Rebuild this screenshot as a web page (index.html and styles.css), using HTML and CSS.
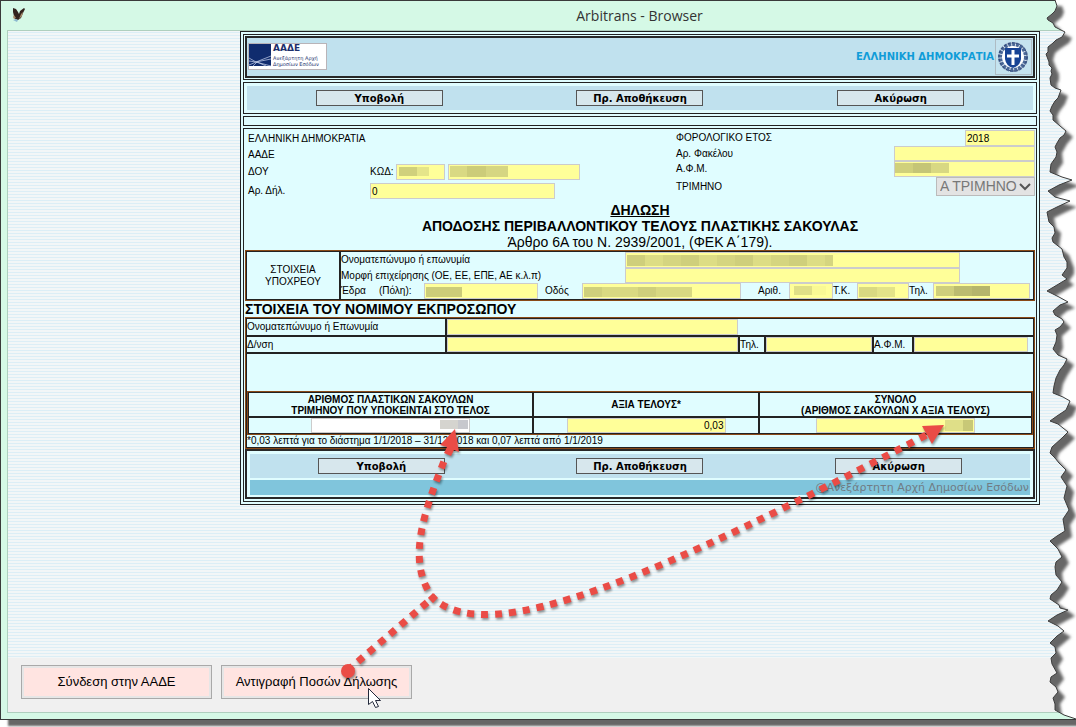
FILE: index.html
```html
<!DOCTYPE html>
<html lang="el">
<head>
<meta charset="utf-8">
<title>Arbitrans - Browser</title>
<link rel="stylesheet" href="styles.css">
</head>
<body>
<div class="window">
  <header class="titlebar">
    <svg class="bird" width="14" height="16" viewBox="0 0 14 16" aria-hidden="true">
      <path d="M1 1l3 1 2 3 1 2 1-3 4-3 1 1-2 4-2 5-3 2-3-1-1-3-1-4z" fill="#33241e"/>
      <path d="M2 8l2 3-2 1-1-2zM9 7l2-2-1 4-3 3z" fill="#a88c6c"/>
      <path d="M1 13l3-1 2 1-1 2-2-1z" fill="#8dbad0"/>
    </svg>
    <h1>Arbitrans - Browser</h1>
  </header>
  <main class="client">
    <div class="browse">
      <form class="panel">
        <div class="frame banner">
          <div class="banner-in">
            <svg class="aade" width="79" height="27" viewBox="0 0 79 27" role="img" aria-label="ΑΑΔΕ">
              <rect x=".5" y=".5" width="78" height="26" fill="#fff" stroke="#b9b4b8"/>
              <rect x="1" y="1" width="22" height="22" fill="#102c6e"/>
              <path d="M1 15l7 4 15-6M1 18l7 1 15-3M1 22l7-3 15 4M5 23l4-4 9 4" fill="none" stroke="#c8d4ee" stroke-width=".7"/>
              <text x="25" y="8" class="aade-big">ΑΑΔΕ</text>
              <text x="25" y="17" class="aade-small">Ανεξάρτητη Αρχή</text>
              <text x="25" y="23" class="aade-small">Δημοσίων Εσόδων</text>
            </svg>
            <span class="republic">ΕΛΛΗΝΙΚΗ ΔΗΜΟΚΡΑΤΙΑ</span>
            <svg class="emblem" width="37" height="36" viewBox="0 0 37 36" aria-hidden="true">
              <rect x=".5" y=".5" width="36" height="35" fill="#c5e3ef" stroke="#aebcc4"/>
              <circle cx="18" cy="18" r="13" fill="#fff" stroke="#dbe6f0" stroke-width="4"/>
              <circle cx="18" cy="18" r="13" fill="none" stroke="#4a6796" stroke-width="4" stroke-dasharray="3 1"/>
              <circle cx="18" cy="18" r="14" fill="none" stroke="#29406f" stroke-dasharray="2 2"/>
              <path d="M10 9h16v11q-1 7-8 9-7-2-8-9z" fill="#174394"/>
              <path d="M18 11v15M12 17h12" stroke="#fff" stroke-width="3"/>
            </svg>
          </div>
        </div>
        <div class="frame">
          <div class="actions">
            <button type="button">Υποβολή</button>
            <button type="button">Πρ. Αποθήκευση</button>
            <button type="button">Ακύρωση</button>
          </div>
        </div>
        <div class="frame strip"></div>
        <div class="frame body">
          <div class="head">
            <div class="head-left">
              <p>ΕΛΛΗΝΙΚΗ ΔΗΜΟΚΡΑΤΙΑ</p>
              <p>ΑΑΔΕ</p>
              <div class="office"><span>ΔΟΥ</span><label for="code">ΚΩΔ:</label><input id="code" class="m-code"><input aria-label="Όνομα ΔΟΥ" class="m-office"></div>
              <div class="number"><label for="num">Αρ. Δήλ.</label><input id="num" value="0"></div>
            </div>
            <div class="head-right">
              <div class="line"><label for="year">ΦΟΡΟΛΟΓΙΚΟ ΕΤΟΣ</label><input id="year" class="year" value="2018"></div>
              <div class="line low"><label for="file">Αρ. Φακέλου</label><input id="file"></div>
              <div class="line"><label for="afm">Α.Φ.Μ.</label><input id="afm" class="m-afm"></div>
              <div class="line quarter"><label for="q">ΤΡΙΜΗΝΟ</label>
                <span class="pick"><select id="q"><option>Α ΤΡΙΜΗΝΟ</option></select><svg width="12" height="8" viewBox="0 0 12 8" aria-hidden="true"><path d="M1 1l5 5 5-5" fill="none" stroke="#555" stroke-width="2"/></svg></span>
              </div>
            </div>
          </div>
          <div class="title">
            <h2><u>ΔΗΛΩΣΗ</u></h2>
            <h2>ΑΠΟΔΟΣΗΣ ΠΕΡΙΒΑΛΛΟΝΤΙΚΟΥ ΤΕΛΟΥΣ ΠΛΑΣΤΙΚΗΣ ΣΑΚΟΥΛΑΣ</h2>
            <p>Άρθρο 6Α του Ν. 2939/2001, (ΦΕΚ Α΄179).</p>
          </div>
          <div class="brown"><div class="dark party">
            <div class="party-name">ΣΤΟΙΧΕΙΑ<br>ΥΠΟΧΡΕΟΥ</div>
            <div class="party-rows">
              <div class="wide"><label for="pn">Ονοματεπώνυμο ή επωνυμία</label><input id="pn" class="m-name"></div>
              <div class="wide low"><label for="pf">Μορφή επιχείρησης (ΟΕ, ΕΕ, ΕΠΕ, ΑΕ κ.λ.π)</label><input id="pf"></div>
              <div class="address">
                <label class="seat" for="city"><span>Έδρα</span><span>(Πόλη):</span></label><input id="city" class="m-city">
                <label class="mid" for="street">Οδός</label><input id="street" class="m-street">
                <label class="far" for="no">Αριθ.</label><input id="no" class="m-no">
                <label for="zip">Τ.Κ.</label><input id="zip" class="m-zip">
                <label for="tel">Τηλ.</label><input id="tel" class="m-tel">
              </div>
            </div>
          </div></div>
          <h2 class="section">ΣΤΟΙΧΕΙΑ ΤΟΥ ΝΟΜΙΜΟΥ ΕΚΠΡΟΣΩΠΟΥ</h2>
          <div class="brown"><div class="dark">
            <table class="agent">
              <colgroup><col class="c1"><col class="c2"><col class="c3"><col class="c4"><col class="c5"><col class="c6"></colgroup>
              <tr><td><label for="an">Ονοματεπώνυμο ή Επωνυμία</label></td><td class="open"><input id="an"></td><td colspan="4"></td></tr>
              <tr><td><label for="aa">Δ/νση</label></td><td><input id="aa"></td><td><label for="at">Τηλ.</label></td><td><input id="at"></td><td><label for="av">Α.Φ.Μ.</label></td><td class="tail"><input id="av"></td></tr>
            </table>
            <div class="amount-wrap"><div class="brown"><div class="dark">
              <table class="amounts">
                <colgroup><col class="a1"><col class="a2"><col></colgroup>
                <tr><th>ΑΡΙΘΜΟΣ ΠΛΑΣΤΙΚΩΝ ΣΑΚΟΥΛΩΝ<br>ΤΡΙΜΗΝΟΥ ΠΟΥ ΥΠΟΚΕΙΝΤΑΙ ΣΤΟ ΤΕΛΟΣ</th><th>ΑΞΙΑ ΤΕΛΟΥΣ*</th><th>ΣΥΝΟΛΟ<br>(ΑΡΙΘΜΟΣ ΣΑΚΟΥΛΩΝ Χ ΑΞΙΑ ΤΕΛΟΥΣ)</th></tr>
                <tr><td><input class="blank" aria-label="Αριθμός σακουλών"></td><td><input aria-label="Αξία τέλους" value="0,03"></td><td><input class="m-total" aria-label="Σύνολο"></td></tr>
              </table>
            </div></div></div>
            <p class="note">*0,03 λεπτά για το διάστημα 1/1/2018 – 31/12/2018 και 0,07 λεπτά από 1/1/2019</p>
          </div></div>
          <div class="bottom">
            <div class="actions">
              <button type="button">Υποβολή</button>
              <button type="button">Πρ. Αποθήκευση</button>
              <button type="button">Ακύρωση</button>
            </div>
            <p class="owner">@Ανεξάρτητη Αρχή Δημοσίων Εσόδων</p>
          </div>
        </div>
      </form>
    </div>
    <footer class="toolbar">
      <button type="button">Σύνδεση στην ΑΑΔΕ</button>
      <button type="button">Αντιγραφή Ποσών Δήλωσης</button>
    </footer>
  </main>
</div>

<svg class="tear" width="40" height="727" viewBox="1036 0 40 727" aria-hidden="true">
  <defs>
    <path id="edge" d="M1055 0L1057 6 1055 11 1052 14 1047 18 1048 20 1053 23 1055 27 1065 32 1062 37 1056 40 1053 43 1048 47 1048 52 1046 54 1049 62 1049 65 1052 68 1051 71 1052 74 1050 78 1051 85 1055 88 1061 90 1058 98 1055 101 1052 106 1050 111 1053 115 1053 120 1060 126 1066 131 1064 135 1060 138 1057 143 1055 147 1057 152 1056 157 1051 164 1050 172 1062 177 1072 180 1059 185 1048 191 1055 197 1070 201 1057 207 1047 212 1049 222 1054 227 1055 233 1052 238 1053 242 1062 249 1064 257 1067 262 1067 268 1062 275 1067 279 1057 285 1047 291 1059 297 1068 302 1060 305 1053 311 1055 315 1062 319 1064 322 1060 327 1055 330 1057 335 1056 342 1053 349 1058 355 1067 359 1064 365 1060 370 1056 378 1054 386 1053 393 1063 397 1070 401 1066 410 1057 416 1050 421 1058 424 1063 428 1068 432 1062 438 1052 447 1050 453 1055 458 1059 463 1066 470 1061 477 1067 486 1064 498 1069 510 1063 519 1065 531 1057 536 1050 541 1058 549 1062 557 1056 562 1055 567 1056 575 1062 582 1057 590 1051 595 1050 599 1059 605 1060 608 1068 610 1057 615 1048 621 1058 626 1064 631 1057 636 1050 643 1055 647 1056 653 1051 658 1052 664 1057 673 1051 677 1050 682 1056 687 1058 692 1053 698 1055 704 1055 710 1064 715 1076 719"/>
    <clipPath id="outside"><path d="M1055 0L1057 6 1055 11 1052 14 1047 18 1048 20 1053 23 1055 27 1065 32 1062 37 1056 40 1053 43 1048 47 1048 52 1046 54 1049 62 1049 65 1052 68 1051 71 1052 74 1050 78 1051 85 1055 88 1061 90 1058 98 1055 101 1052 106 1050 111 1053 115 1053 120 1060 126 1066 131 1064 135 1060 138 1057 143 1055 147 1057 152 1056 157 1051 164 1050 172 1062 177 1072 180 1059 185 1048 191 1055 197 1070 201 1057 207 1047 212 1049 222 1054 227 1055 233 1052 238 1053 242 1062 249 1064 257 1067 262 1067 268 1062 275 1067 279 1057 285 1047 291 1059 297 1068 302 1060 305 1053 311 1055 315 1062 319 1064 322 1060 327 1055 330 1057 335 1056 342 1053 349 1058 355 1067 359 1064 365 1060 370 1056 378 1054 386 1053 393 1063 397 1070 401 1066 410 1057 416 1050 421 1058 424 1063 428 1068 432 1062 438 1052 447 1050 453 1055 458 1059 463 1066 470 1061 477 1067 486 1064 498 1069 510 1063 519 1065 531 1057 536 1050 541 1058 549 1062 557 1056 562 1055 567 1056 575 1062 582 1057 590 1051 595 1050 599 1059 605 1060 608 1068 610 1057 615 1048 621 1058 626 1064 631 1057 636 1050 643 1055 647 1056 653 1051 658 1052 664 1057 673 1051 677 1050 682 1056 687 1058 692 1053 698 1055 704 1055 710 1064 715 1076 719V0z"/></clipPath>
    <filter id="soft" filterUnits="userSpaceOnUse" x="1020" y="-10" width="80" height="750"><feGaussianBlur stdDeviation="1.5"/></filter>
  </defs>
  <g clip-path="url(#outside)">
    <rect x="1036" y="0" width="40" height="727" fill="#fff"/>
    <g filter="url(#soft)"><path transform="translate(7 6)" fill="#666" stroke="none" d="M1020 0H1055L1057 6 1055 11 1047 18 1053 23 1055 27 1065 32 1062 37 1053 43 1048 47 1046 54 1049 62 1052 68 1052 74 1050 78 1051 85 1061 90 1058 98 1052 106 1050 111 1053 120 1066 131 1060 138 1055 147 1056 157 1051 164 1050 172 1072 180 1059 185 1048 191 1055 197 1070 201 1057 207 1047 212 1049 222 1054 227 1052 241 1062 249 1067 262 1067 268 1062 275 1067 279 1057 285 1047 291 1059 297 1068 302 1060 305 1053 311 1064 322 1055 330 1056 342 1053 349 1067 359 1060 370 1056 378 1053 393 1070 401 1066 410 1050 421 1058 424 1068 432 1062 438 1052 447 1050 453 1066 470 1061 477 1067 486 1064 498 1069 510 1063 519 1065 531 1050 541 1058 549 1062 557 1055 567 1056 575 1062 582 1057 590 1050 597 1068 610 1048 621 1064 631 1050 643 1056 653 1051 661 1057 673 1050 682 1058 691 1053 698 1055 710 1076 719H1020z"/></g>
  </g>
  <use href="#edge" fill="none" stroke="#3c3c3c"/>
</svg>

<svg class="notes" width="1076" height="727" viewBox="0 0 1076 727" aria-hidden="true">
  <g class="arrows" fill="#ea4c46" stroke="none">
    <g fill="none" stroke="#ea4c46" stroke-width="7">
      <path d="M348 670L430 600" stroke-dasharray="7 7" stroke-dashoffset="-13"/>
      <path d="M433 598C405 560 425 510 446 456" stroke-dasharray="7 7" stroke-dashoffset="-10"/>
      <path d="M433 598C490 650 660 575 930 433" stroke-dasharray="7 7" stroke-dashoffset="-10"/>
    </g>
    <circle cx="348" cy="671" r="7"/>
    <path d="M433 593l5 5-5 5-5-5z"/>
    <path d="M455 429l4 23-5-2-3 6-7-3 3-6-7-2z"/>
    <path d="M944 425l-22 1 10 18z"/>
  </g>
  <path d="M368.500 688.500v16l4-3 3 6 3-1-3-6h5z" fill="#fff" stroke="#22283a"/>
</svg>
</body>
</html>
```
FILE: styles.css
```css
* { box-sizing: border-box; }
body { margin: 0; min-height: 100vh; position: relative; display: flex; flex-direction: column; overflow: hidden; background: #fff; color: #000; font: 10px/12px "Liberation Sans", sans-serif; }
h1, h2, p { margin: 0; font-size: inherit; font-weight: normal; }
button, input, select { font: inherit; color: inherit; margin: 0; border-radius: 0; }

.window { flex: 1; display: flex; flex-direction: column; margin-bottom: 7px; padding: 0 0 6px 6px; border: 1px solid #3a3a3a; border-right: 0; background: #d5f9e6; box-shadow: 8px 6px 2px #666; }
.titlebar { height: 29px; position: relative; display: flex; align-items: center; justify-content: center; padding-left: 196px; }
.titlebar h1 { font: 14px/20px "Open Sans", sans-serif; color: #333; }
.bird { position: absolute; left: 5px; top: 6px; }
.client { flex: 1; display: flex; flex-direction: column; border: 1px solid #afcfbe; border-right: 0; background: #f0f0f0; }
.browse { flex: 1; background: repeating-linear-gradient(#f2f6f7 0 1px, #dceef6 1px 2px, #f2f6f7 2px 3px); }
.toolbar { display: flex; gap: 9px; padding: 7px 13px 13px; }
.toolbar button { width: 191px; height: 34px; padding: 0; border: 1px solid #a9a9a9; box-shadow: inset 0 0 0 2px #e6e6e6; background: #ffe4e1; font-size: 13px; }

.panel { margin: 0 36px 0 232px; padding: 2px; border: 1px solid #222; background: #e0fdff; display: flex; flex-direction: column; gap: 2px; }
.frame { border: 1px solid #222; padding: 1px; }
.banner-in { height: 42px; display: flex; align-items: center; border: 2px solid #282828; padding: 0 1px; background: #c0e1ee; }
.aade { margin-top: -1px; }
.aade-big { font: bold 9px "DejaVu Sans", sans-serif; fill: #1c2f6b; }
.aade-small { font: 5px "DejaVu Sans", sans-serif; fill: #1c2f6b; }
.republic { margin-left: auto; padding-right: 1px; color: #109cd8; font: bold 10px/14px "DejaVu Sans", sans-serif; }
.actions { display: grid; grid-template-columns: repeat(3, 1fr); place-items: center; height: 24px; padding: 0 2px; background: #c0e1ee; }
.frame > .actions { margin: 2px; }
.actions > :first-child { justify-self: center; }
.actions button { width: 127px; height: 16px; padding: 1px 0 0; border: 1px solid #555; background: #d7e7ed; font: bold 10px/13px "DejaVu Sans", sans-serif; }
.strip { height: 10px; }
.body { padding: 0 1px 2px; }

input { display: block; width: 100%; min-width: 0; height: 16px; padding: 0 1px; border: 1px solid #ccc; background: #ff9 no-repeat; }
.low input { height: 15px; }
.head { display: grid; grid-template-columns: 428px 1fr; height: 73px; padding-left: 3px; }
.head-left { display: grid; grid-template-rows: 16px 16px 18px 20px; align-items: center; padding-top: 2px; }
.office { display: grid; grid-template-columns: 122px 26px 49px 135px; align-items: center; }
.office .m-office { margin-left: 3px; width: 132px; }
.number { display: grid; grid-template-columns: 122px 185px; align-items: center; }
.head-right { padding-top: 1px; }
.line { display: flex; justify-content: space-between; align-items: center; }
.line input { width: 141px; }
.line .year { width: 70px; }
.pick { position: relative; width: 99px; }
.pick svg { position: absolute; right: 4px; top: 6px; }
.pick select { display: block; width: 100%; height: 19px; padding: 0 3px; border: 1px solid #bbb; background: #e3e3e3; color: #777; font-size: 14px; line-height: 17px; appearance: none; }

.title { text-align: center; font-size: 14px; line-height: 16px; }
.title h2, .section { font-weight: bold; }
.section { font-size: 14px; line-height: 16px; }
.brown { border: 1px solid #8a4a17; }
.dark { border: 1px solid #222; }
.party { display: flex; }
.party-name { width: 94px; display: flex; align-items: center; justify-content: center; text-align: center; border-right: 2px solid #222; }
.party-rows { flex: 1; }
.wide { display: grid; grid-template-columns: 284px 335fr 73fr; align-items: center; }
.address { display: grid; grid-template-columns: 83px 114fr 44px 159fr 48px 44fr 24px 52fr 24px 97fr; align-items: center; padding-right: 3px; }
.seat { display: flex; gap: 13px; }
.mid { padding-left: 7px; }
.far { padding-left: 17px; }

table { width: 100%; table-layout: fixed; border-spacing: 0; }
td, th { padding: 0; border: 0 solid #222; border-right-width: 2px; }
td:last-child, th:last-child { border-right: 0; }
.agent td { border-bottom-width: 2px; height: 18px; }
.agent tr + tr td { height: 17px; }
.agent input { height: 16px; width: 291px; max-width: 100%; }
.agent tr + tr input { height: 15px; }
.agent .open { border-right: 0; }
.agent .tail { padding-right: 5px; }
.c1 { width: 200px; } .c2 { width: 293px; } .c3 { width: 26px; } .c4 { width: 108px; } .c5 { width: 40px; } .c6 { width: auto; }
.amount-wrap { padding-top: 37px; }
.a1 { width: 285px; } .a2 { width: 226px; }
.amounts th { height: 25px; border-bottom-width: 2px; font-size: 10px; line-height: 11px; font-weight: bold; }
.amounts input { width: 159px; height: 15px; margin: 0 auto; text-align: right; }
.amounts input.blank { background-color: #fff; }
.note { height: 12px; line-height: 12px; }
.bottom { display: grid; gap: 2px; border: 2px solid #282828; padding: 3px 3px 2px; }
.owner { background: #80c5dc; color: #707c84; text-align: right; padding-right: 1px; font: 11px/15px "DejaVu Sans", sans-serif; }

.m-code { background-image: linear-gradient(90deg, #d0d07c 60%, #e5e58a 60%); background-size: 30px 9px; background-position: 2px 2px; }
.m-office { background-image: linear-gradient(90deg, #d9d983 30%, #cccc79 30% 62%, #d6d682 62%); background-size: 58px 11px; background-position: 1px 1px; }
.m-afm { background-image: linear-gradient(90deg, #d0d07c 33%, #c5c577 33% 67%, #d8d883 67%); background-size: 54px 10px; background-position: 0 1px; }
.m-name { background-image: repeating-linear-gradient(90deg, #cfcf7c 0 18px, #dddd85 18px 36px, #d5d580 36px 54px); background-size: 206px 11px; background-position: 1px 2px; }
.m-city { background-image: linear-gradient(#cccc79, #cccc79); background-size: 36px 10px; background-position: 1px 3px; }
.m-street { background-image: repeating-linear-gradient(90deg, #cfcf7c 0 18px, #d9d982 18px 54px); background-size: 108px 10px; background-position: 1px 3px; }
.m-no { background-image: linear-gradient(90deg, #dfdf87 56%, #f9f995 56%); background-size: 32px 9px; background-position: 4px 2px; }
.m-zip { background-image: linear-gradient(90deg, #d9d982 50%, #e3e389 50%); background-size: 36px 10px; background-position: 1px 3px; }
.m-tel { background-image: linear-gradient(90deg, #cfcf7c 33%, #bcbc70 33% 67%, #b5b56c 67%); background-size: 54px 10px; background-position: 2px 2px; }
.amounts .blank { background-image: linear-gradient(90deg, #d5d4cf 64%, #c7c8cd 64%); background-size: 28px 9px; background-position: right 1px top 1px; }
.m-total { background-image: linear-gradient(90deg, #dfdf88 64%, #c8c877 64%); background-size: 28px 11px; background-position: right 1px top 1px; }

.tear { position: absolute; right: 0; top: 0; }
.notes { position: absolute; left: 0; top: 0; pointer-events: none; }
.arrows { filter: drop-shadow(1px 2px 1px rgba(0, 0, 0, .4)); }
```
